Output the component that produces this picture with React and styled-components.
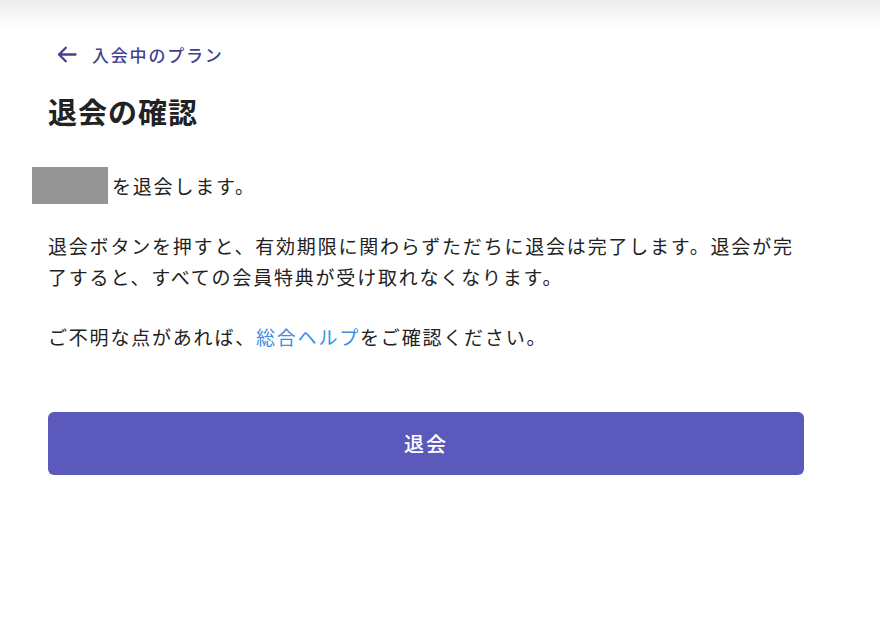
import styled, { createGlobalStyle } from 'styled-components';

const accent = '#5b59bb';
const navy = '#44428e';

const GlobalStyle = createGlobalStyle`
  html, body {
    margin: 0;
    padding: 0;
    background: #fff;
  }
  body {
    font-family: 'Noto Sans CJK JP', 'Noto Sans', sans-serif;
    color: #222;
  }
`;

const Page = styled.div`
  min-height: 100vh;
  background: linear-gradient(#ebebeb 0, #f6f6f6 14px, #fff 32px);
  padding: 42px 0 0 48px;
  box-sizing: border-box;
`;

const Main = styled.main`
  width: 756px;
`;

const BackLink = styled.a`
  display: flex;
  align-items: center;
  gap: 15px;
  height: 24px;
  padding-left: 9px;
  color: ${navy};
  font-size: 17px;
  font-weight: 500;
  letter-spacing: 1.8px;
  text-decoration: none;
  cursor: pointer;
`;

const Title = styled.h1`
  margin: 25px 0 0;
  font-size: 29px;
  line-height: 40px;
  font-weight: 700;
  letter-spacing: 1px;
  color: #222;
`;

const Target = styled.div`
  display: flex;
  align-items: center;
  gap: 4px;
  margin: 36px 0 0 -16px;
  font-size: 19px;
  letter-spacing: 1.8px;
`;

const Redacted = styled.span`
  display: block;
  width: 76px;
  height: 37px;
  background: #959595;
`;

const Text = styled.p`
  margin: ${(p) => p.$gap}px 0 0;
  font-size: 19px;
  line-height: 31px;
  letter-spacing: 1.8px;
  color: #222;
`;

const HelpLink = styled.a`
  color: #3b8fe2;
  text-decoration: none;
`;

const QuitButton = styled.button`
  display: block;
  width: 100%;
  height: 63px;
  margin-top: 60px;
  border: none;
  border-radius: 6px;
  background: ${accent};
  color: #fff;
  font-family: inherit;
  font-size: 20px;
  font-weight: 500;
  letter-spacing: 2px;
  cursor: pointer;
`;

const BackArrow = () => (
  <svg width="20" height="17" viewBox="0 0 20 17" fill="none">
    <path
      d="M18.5 8.5H2M8.8 1.7L2 8.5l6.8 6.8"
      stroke="currentColor"
      strokeWidth="2.3"
      strokeLinecap="round"
      strokeLinejoin="round"
    />
  </svg>
);

const App = () => (
  <>
    <GlobalStyle />
    <Page>
      <Main>
        <BackLink>
          <BackArrow />
          入会中のプラン
        </BackLink>
        <Title>退会の確認</Title>
        <Target>
          <Redacted />
          を退会します。
        </Target>
        <Text $gap={26}>
          退会ボタンを押すと、有効期限に関わらずただちに退会は完了します。退会が完了すると、すべての会員特典が受け取れなくなります。
        </Text>
        <Text $gap={29}>
          ご不明な点があれば、<HelpLink>総合ヘルプ</HelpLink>をご確認ください。
        </Text>
        <QuitButton>退会</QuitButton>
      </Main>
    </Page>
  </>
);

export default App;
